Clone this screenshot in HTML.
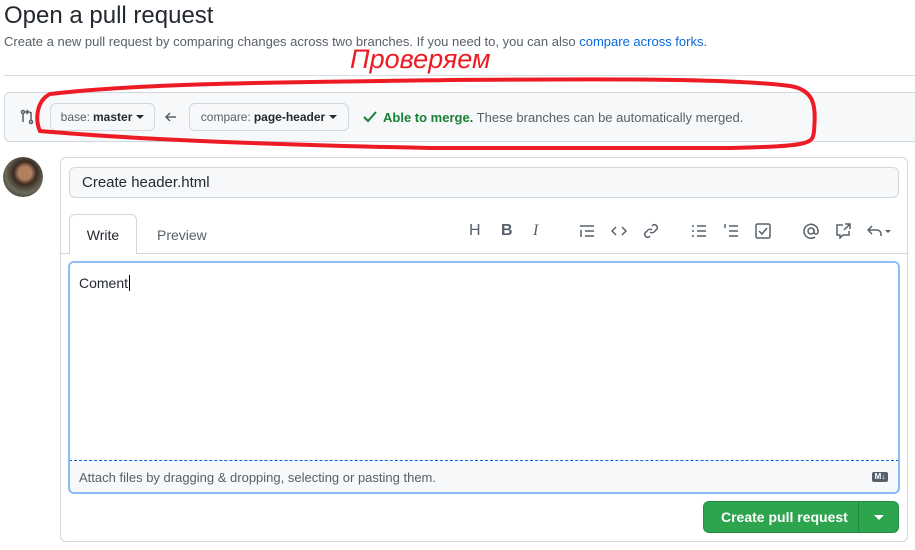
<!DOCTYPE html>
<html><head><meta charset="utf-8"><style>
*{box-sizing:border-box;margin:0;padding:0}
body{width:915px;height:550px;background:#fff;font-family:"Liberation Sans","DejaVu Sans",sans-serif;color:#24292f;position:relative;overflow:hidden}
.a{position:absolute}
.btn{position:absolute;border:1px solid #d0d7de;border-radius:6px;background:#f6f8fa;font-size:12px;color:#57606a;display:flex;align-items:center;justify-content:center}
.btn b{color:#24292f;margin-left:3px;font-weight:600}
.caret{display:inline-block;width:0;height:0;border-left:4px solid transparent;border-right:4px solid transparent;border-top:4px solid #24292f;margin-left:4px}
.ic{position:absolute;top:223px}
</style></head><body>
<div class="a" style="left:4px;top:2px;font-size:24px;color:#24292f">Open a pull request</div>
<div class="a" style="left:4px;top:34px;font-size:13px;color:#57606a">Create a new pull request by comparing changes across two branches. If you need to, you can also <span style="color:#0969da">compare across forks</span>.</div>
<div class="a" style="left:4px;top:75px;width:911px;height:1px;background:#d8dee4"></div>
<div class="a" style="left:350px;top:44px;font-size:27px;font-style:italic;color:#ed1c24">Проверяем</div>
<div class="a" style="left:4px;top:92px;width:920px;height:50px;background:#f6f8fa;border:1px solid #d0d7de;border-radius:6px"></div>
<svg class="a" style="left:19px;top:109px" width="16" height="16" viewBox="0 0 16 16" fill="none" stroke="#57606a" stroke-width="1.5"><circle cx="4" cy="3" r="1.5"/><path d="M4 5v8M12 3v8M9 1L7 3l2 2M7 3h3a2 2 0 012 2"/><circle cx="12" cy="13" r="1.5"/></svg>
<div class="btn" style="left:50px;top:103px;width:105px;height:28px">base:<b>master</b><span class="caret"></span></div>
<svg class="a" style="left:164px;top:110px" width="14" height="14" viewBox="0 0 14 14" fill="none" stroke="#57606a" stroke-width="1.5"><path d="M12 7H2M6 3L2 7l4 4"/></svg>
<div class="btn" style="left:189px;top:103px;width:160px;height:28px">compare:<b>page-header</b><span class="caret"></span></div>
<svg class="a" style="left:363px;top:111px" width="14" height="12" viewBox="0 0 14 12" fill="none" stroke="#1a7f37" stroke-width="2"><path d="M1 6l4 4 8-9"/></svg>
<div class="a" style="left:383px;top:110px;font-size:13px;color:#57606a"><b style="color:#1a7f37">Able to merge.</b> These branches can be automatically merged.</div>
<svg class="a" style="left:30px;top:76px" width="800" height="80"><path d="M20 18 C120 6 300 6 420 4 C560 3 700 2 760 10 C785 14 786 30 784 55 C783 68 780 70 700 72 L400 72 C200 68 90 62 10 55 C5 45 6 25 20 18 Z" fill="none" stroke="#ed1c24" stroke-width="4"/></svg>
<div class="a" style="left:3px;top:157px;width:40px;height:40px;border-radius:50%;background:radial-gradient(circle at 55% 40%,#b08060 0 20%,#3a2a22 35%,#6a6a5a 60%,#2a2420 100%)"></div>
<div class="a" style="left:60px;top:157px;width:848px;height:385px;border:1px solid #d0d7de;border-radius:6px"></div>
<div class="a" style="left:69px;top:167px;width:830px;height:31px;border:1px solid #d0d7de;border-radius:6px;background:#f6f8fa;font-size:15px;padding:6px 12px;color:#24292f">Create header.html</div>
<div class="a" style="left:61px;top:253px;width:846px;height:1px;background:#d0d7de"></div>
<div class="a" style="left:69px;top:214px;width:68px;height:40px;border:1px solid #d0d7de;border-bottom:none;border-radius:6px 6px 0 0;background:#fff;font-size:14px;text-align:center;line-height:40px">Write</div>
<div class="a" style="left:157px;top:214px;font-size:14px;line-height:42px;color:#57606a">Preview</div>
<div class="ic" style="left:469px;top:222px;font-size:16px;color:#57606a">H</div>
<div class="ic" style="left:501px;top:222px;font-size:16px;font-weight:bold;color:#57606a">B</div>
<div class="ic" style="left:533px;top:222px;font-size:16px;font-style:italic;font-family:'Liberation Serif',serif;color:#57606a">I</div>
<svg class="ic" style="left:579px" width="16" height="16" fill="none" stroke="#57606a" stroke-width="1.5"><path d="M1 3h14M6 8h9M6 13h9M2 7v7"/></svg>
<svg class="ic" style="left:611px" width="16" height="16" fill="none" stroke="#57606a" stroke-width="1.5"><path d="M5 4L1 8l4 4M11 4l4 4-4 4"/></svg>
<svg class="ic" style="left:643px" width="16" height="16" fill="none" stroke="#57606a" stroke-width="1.5"><path d="M7 9a3 3 0 004 0l3-3a3 3 0 00-4-4L9 3M9 7a3 3 0 00-4 0L2 10a3 3 0 004 4l1-1"/></svg>
<svg class="ic" style="left:691px" width="16" height="16" fill="none" stroke="#57606a" stroke-width="1.5"><path d="M1 3h2M1 8h2M1 13h2M6 3h9M6 8h9M6 13h9"/></svg>
<svg class="ic" style="left:723px" width="16" height="16" fill="none" stroke="#57606a" stroke-width="1.5"><path d="M6 3h9M6 8h9M6 13h9M2 1v4"/></svg>
<svg class="ic" style="left:755px" width="16" height="16" fill="none" stroke="#57606a" stroke-width="1.5"><rect x="1" y="1" width="14" height="14" rx="1.5"/><path d="M4 8l3 3 5-6"/></svg>
<svg class="ic" style="left:803px" width="16" height="16" fill="none" stroke="#57606a" stroke-width="1.5"><circle cx="8" cy="8" r="3"/><path d="M11 6v3a2 2 0 004 0V8a7 7 0 10-3 6"/></svg>
<svg class="ic" style="left:835px" width="16" height="16" fill="none" stroke="#57606a" stroke-width="1.5"><path d="M8 2H2v10h3v3l3-3h6V8M10 1h5v5M15 1L9 7"/></svg>
<svg class="ic" style="left:867px" width="24" height="16" fill="none" stroke="#57606a" stroke-width="1.5"><path d="M5 3L1 7l4 4M1 7h9a4 4 0 014 4v2"/><path d="M18 7h6l-3 3z" fill="#57606a" stroke="none"/></svg>
<div class="a" style="left:68px;top:261px;width:832px;height:233px;border:2px solid #8cbcf5;border-radius:6px;background:#f6f8fa;overflow:hidden">
<div style="height:199px;background:#fff;border:1px solid #0969da;border-bottom:1px dashed #0969da;margin:-1px;font-size:14px;padding:12px 9px">Coment<span style="border-left:1px solid #000;margin-left:1px"></span></div>
<div style="font-size:13px;color:#57606a;padding:10px 9px">Attach files by dragging &amp; dropping, selecting or pasting them.</div>
</div>
<div class="a" style="left:872px;top:472px;width:16px;height:10px;background:#57606a;border-radius:2px;color:#fff;font-size:8px;font-weight:bold;line-height:10px;text-align:center">M↓</div>
<div class="a" style="left:703px;top:501px;width:196px;height:32px;background:#2da44e;border:1px solid #278c43;border-radius:6px;color:#fff;font-size:14px;font-weight:600;line-height:30px">
<span style="position:absolute;left:17px">Create pull request</span>
<div style="position:absolute;left:154px;top:0;width:1px;height:30px;background:#238640"></div>
<span style="position:absolute;left:170px;top:13px;border-left:5px solid transparent;border-right:5px solid transparent;border-top:5px solid #fff"></span>
</div>
</body></html>
